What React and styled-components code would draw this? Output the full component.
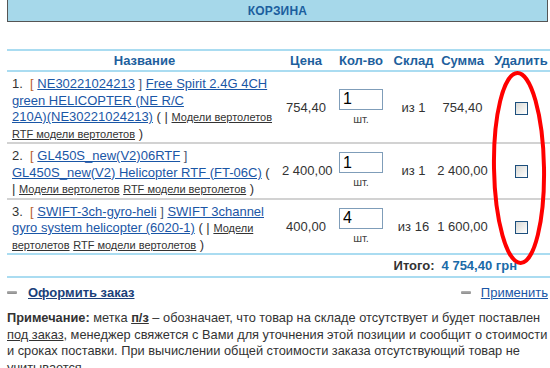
import React from "react";
import styled, { createGlobalStyle } from "styled-components";

const Global = createGlobalStyle`
  html, body { margin: 0; padding: 0; background: #fff; overflow: hidden; }
  body { font-family: "Liberation Sans", Arial, sans-serif; color: #333; }
`;

const Page = styled.div`
  position: relative;
  width: 545px;
  padding-left: 7px;
`;

const TitleBar = styled.div`
  width: 539px;
  height: 21px;
  background: #a6d8ea;
  border: 1px solid #555;
  border-top: none;
  display: flex;
  align-items: center;
  justify-content: center;
  font-size: 12px;
  font-weight: bold;
  color: #1b5e9e;
  letter-spacing: 0.2px;
`;

const CartTable = styled.table`
  margin-top: 27px;
  width: 545px;
  border-collapse: collapse;
  font-size: 13px;
  table-layout: fixed;
`;

const HeadRow = styled.tr`
  border-top: 2px solid #aadcf1;
  border-bottom: 2px solid #aadcf1;
`;

const Th = styled.th`
  height: 19px;
  padding: 0;
  font-size: 13px;
  font-weight: bold;
  color: #1d5f9d;
  text-align: center;
  width: ${(p) => p.$w}px;
`;

const Row = styled.tr`
  border-bottom: 2px solid ${(p) => (p.$last ? "#aadcf1" : "#d2d2d2")};
  height: ${(p) => p.$h}px;
`;

const NameCell = styled.td`
  padding: 4px 6px 0 5px;
  line-height: 16.5px;
  vertical-align: middle;
  color: #333;
`;

const Cell = styled.td`
  padding: 0;
  text-align: center;
  vertical-align: middle;
  color: #333;
  white-space: nowrap;
`;

const Num = styled.span`
  color: #333;
`;

const Bracket = styled.span`
  color: ${(p) => (p.$open ? "#b8602f" : "#4a5670")};
`;

const MainLink = styled.a`
  color: #1a56a6;
  text-decoration: underline;
`;

const CatLink = styled.a`
  color: #333;
  font-size: 11px;
  text-decoration: underline;
`;

const QtyBox = styled.div`
  display: flex;
  flex-direction: column;
  align-items: center;
  gap: 2px;
`;

const QtyInput = styled.input`
  box-sizing: border-box;
  width: 44px;
  height: 21px;
  border: 1px solid #7f9db9;
  padding: 0 3px;
  font-family: "Liberation Sans", Arial, sans-serif;
  font-size: 16px;
  color: #000;
  outline: none;
  line-height: 19px;
`;

const Unit = styled.span`
  font-size: 11px;
  color: #444;
  line-height: 14px;
`;

const Check = styled.input`
  appearance: none;
  -webkit-appearance: none;
  margin: 0;
  width: 13px;
  height: 13px;
  border: 1px solid #1d4f7d;
  background: linear-gradient(135deg, #d8d8d4 0%, #f4f4f2 70%, #fff 100%);
  vertical-align: middle;
`;

const TotalRow = styled.div`
  height: 21px;
  border-bottom: 2px solid #aadcf1;
  display: flex;
  align-items: center;
  justify-content: flex-end;
  padding-right: 35px;
  gap: 7px;
  font-size: 13px;
  font-weight: bold;
`;

const TotalLabel = styled.span`
  color: #333;
`;

const TotalValue = styled.span`
  color: #1a6aa8;
`;

const Actions = styled.div`
  display: flex;
  justify-content: space-between;
  align-items: center;
  height: 29px;
  padding-right: 4px;
  font-size: 13px;
`;

const Action = styled.div`
  display: flex;
  align-items: center;
  gap: ${(p) => (p.$bold ? "11px" : "10px")};
`;

const Dash = styled.span`
  width: 10px;
  height: 3px;
  border-radius: 1px;
  background: linear-gradient(#b4b4b4, #8a8a8a);
`;

const ActionLink = styled.a`
  color: ${(p) => (p.$bold ? "#1a3f7a" : "#1a56a6")};
  font-weight: ${(p) => (p.$bold ? "bold" : "normal")};
  text-decoration: underline;
`;

const Note = styled.p`
  margin: 3px 0 0;
  font-size: 12.8px;
  line-height: 16.5px;
  color: #333;
  padding-right: 4px;
`;

const U = styled.span`
  text-decoration: underline;
  font-weight: ${(p) => (p.$bold ? "bold" : "normal")};
`;

const Circle = styled.svg`
  position: absolute;
  left: 488px;
  top: 69px;
  pointer-events: none;
`;

const items = [
  {
    n: 1,
    code: "NE30221024213",
    title: "Free Spirit 2.4G 4CH green HELICOPTER (NE R/C 210A)\u2060(\u2060NE30221024213)",
    price: "754,40",
    qty: "1",
    stock: "из 1",
    sum: "754,40",
    h: 69,
  },
  {
    n: 2,
    code: "GL450S_new(V2)06RTF",
    title: "GL450S_new(V2) Helicopter RTF (FT-06C)",
    price: "2 400,00",
    qty: "1",
    stock: "из 1",
    sum: "2 400,00",
    h: 53,
  },
  {
    n: 3,
    code: "SWIFT-3ch-gyro-heli",
    title: "SWIFT 3channel gyro system helicopter (6020-1)",
    price: "400,00",
    qty: "4",
    stock: "из 16",
    sum: "1 600,00",
    h: 54,
  },
];

export default function App() {
  return (
    <>
      <Global />
      <Page>
        <TitleBar>КОРЗИНА</TitleBar>
        <CartTable>
          <thead>
            <HeadRow>
              <Th $w={275}>Название</Th>
              <Th $w={48}>Цена</Th>
              <Th $w={62}>Кол-во</Th>
              <Th $w={43}>Склад</Th>
              <Th $w={55}>Сумма</Th>
              <Th $w={62}>Удалить</Th>
            </HeadRow>
          </thead>
          <tbody>
            {items.map((it, i) => (
              <Row key={it.n} $h={it.h} $last={i === items.length - 1}>
                <NameCell>
                  <Num>{it.n}.&nbsp;&nbsp;</Num>
                  <Bracket $open>[</Bracket>{" "}
                  <MainLink href="#">{it.code}</MainLink>{" "}
                  <Bracket>]</Bracket>{" "}
                  <MainLink href="#">{it.title}</MainLink> ( |{" "}
                  <CatLink href="#">Модели вертолетов</CatLink>{" "}
                  <CatLink href="#">RTF модели вертолетов</CatLink> )
                </NameCell>
                <Cell>{it.price}</Cell>
                <Cell>
                  <QtyBox>
                    <QtyInput defaultValue={it.qty} />
                    <Unit>шт.</Unit>
                  </QtyBox>
                </Cell>
                <Cell>{it.stock}</Cell>
                <Cell>{it.sum}</Cell>
                <Cell>
                  <Check type="checkbox" />
                </Cell>
              </Row>
            ))}
          </tbody>
        </CartTable>
        <TotalRow>
          <TotalLabel>Итого:</TotalLabel>
          <TotalValue>4 754,40 грн</TotalValue>
        </TotalRow>
        <Actions>
          <Action $bold>
            <Dash />
            <ActionLink href="#" $bold>
              Оформить заказ
            </ActionLink>
          </Action>
          <Action>
            <Dash />
            <ActionLink href="#">Применить</ActionLink>
          </Action>
        </Actions>
        <Note>
          <b>Примечание:</b> метка <U $bold>п/з</U> – обозначает, что товар на
          складе отсутствует и будет поставлен <U>под заказ</U>, менеджер
          свяжется с Вами для уточнения этой позиции и сообщит о стоимости и
          сроках поставки. При вычислении общей стоимости заказа отсутствующий
          товар не учитывается.
        </Note>
        <Circle width="62" height="200" viewBox="0 0 62 200">
          <ellipse
            cx="31"
            cy="99"
            rx="25"
            ry="95"
            fill="none"
            stroke="#ff0000"
            strokeWidth="4"
            transform="rotate(-1 31 99)"
          />
        </Circle>
      </Page>
    </>
  );
}
